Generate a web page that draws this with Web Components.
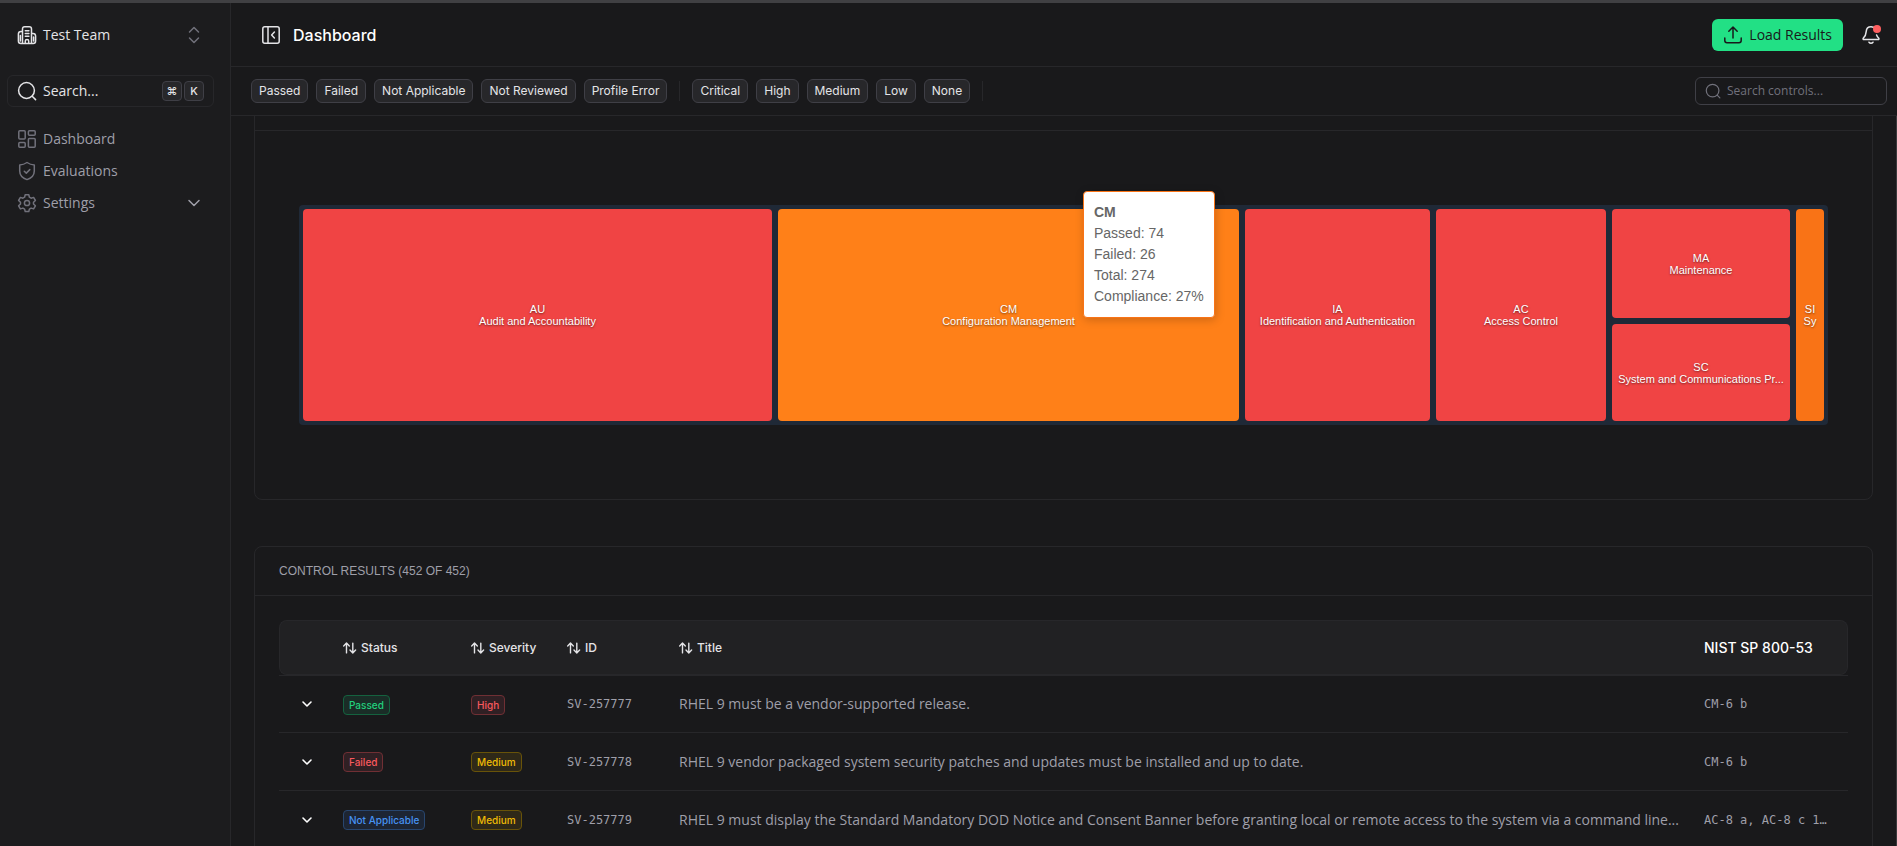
<!DOCTYPE html>
<html lang="en">
<head>
<meta charset="utf-8">
<meta name="viewport" content="width=device-width, initial-scale=1">
<title>Dashboard</title>
<style>
  html, body { margin: 0; height: 100%; }
  body {
    --bg: #19191b; --side: #1c1c1e; --line: #27272a; --chip: #27272a; --edge: #3f3f46;
    --muted: #9f9fa9; --dim: #71717b; --text: #e4e4e7;
    --label: Inter, sans-serif; --body: "Open Sans", sans-serif;
    background: var(--bg); color: var(--text); overflow: hidden;
    font-family: var(--body); font-size: 14px; line-height: 20px;
  }
</style>
</head>
<body>
<app-shell>
  <side-nav slot="side"></side-nav>
  <top-bar slot="main"></top-bar>
  <filter-bar slot="main"></filter-bar>
  <page-content slot="main"></page-content>
</app-shell>
<script>
const icons = {
  building: '<path d="M5.500 18.500V3.900a2.200 2.200 0 0 1 2.200-2.200h4.600a2.200 2.200 0 0 1 2.200 2.200v14.600M5.500 6.500H4A2.600 2.600 0 0 0 1.400 9.100v6.900A2.500 2.500 0 0 0 3.900 18.500h12.200a2.500 2.500 0 0 0 2.500-2.500v-4.900a2.600 2.600 0 0 0-2.600-2.600h-1.500M8.300 5.700h3.600M8.300 8.500h3.600M8.300 11.300h3.600M8.300 18.300v-2.200a1.700 1.700 0 0 1 3.400 0v2.200M3.400 10.500v5.500M16.600 12v4"/>',
  updown: '<path d="m5.500 7 4.500-4.500L14.500 7M5.500 13l4.500 4.500L14.500 13"/>',
  search: '<circle cx="9.500" cy="9.500" r="7.900"/><path d="m15.200 15.200 3.400 3.400"/>',
  grid: '<rect x="1.800" y="1.800" width="6.400" height="8.200" rx="1"/><rect x="11.400" y="1.800" width="6.800" height="4.400" rx="1"/><rect x="11.400" y="9.600" width="6.800" height="8.600" rx="1"/><rect x="1.800" y="13.400" width="6.400" height="4.800" rx="1"/>',
  shield: '<path d="M10 1.500c2.200 1.500 4.600 2.300 7.300 2.400v6c0 4.300-2.600 7-7.300 8.700-4.700-1.700-7.300-4.400-7.300-8.700v-6C5.400 3.800 7.800 3 10 1.500z"/><path d="m7.300 10.200 2 1.900 3.500-3.500"/>',
  gear: '<path d="M8.200 1.700h3.600l.6 2.500 1.700 1 2.500-.8 1.800 3.100-1.900 1.800v1.700l1.900 1.800-1.800 3.100-2.500-.8-1.700 1-.6 2.400H8.200l-.6-2.400-1.700-1-2.500.8-1.800-3.100L3.500 11V9.300L1.600 7.500l1.800-3.100 2.500.8 1.700-1z"/><circle cx="10" cy="10" r="2.600"/>',
  down: '<path d="m5 7.500 5 5 5-5"/>',
  panel: '<rect x="1.800" y="1.800" width="16.400" height="16.400" rx="2"/><path d="M7 1.800v16.400M13.400 7l-2.800 3 2.800 3"/>',
  upload: '<path d="M10 13V2M5.800 6.200 10 2l4.200 4.200M1.800 13v2.600a2.200 2.200 0 0 0 2.200 2.200h12a2.200 2.200 0 0 0 2.200-2.200V13"/>',
  bell: '<path d="M12.400 2.300C11.700 2 10.900 1.800 10 1.800c-3 0-4.600 2-4.800 4.800C5 9.600 4 11.400 2.400 13c-.7.800-.3 1.600.6 1.600h14c.9 0 1.300-.8.600-1.600-.9-.9-1.600-1.900-2-3M8 17.200c1 1.300 3 1.300 4 0"/>',
  sort: '<path d="M5 17V3M1 7l4-4 4 4M14 3v14M10 13l4 4 4-4"/>'
};
const icon = (name, size = 20, weight = 1.5) =>
  `<svg width="${size}" height="${size}" viewBox="0 0 20 20" fill="none" stroke="currentColor" stroke-width="${weight}" stroke-linecap="round" stroke-linejoin="round" aria-hidden="true">${icons[name]}</svg>`;

const reset = `*{box-sizing:border-box} svg{display:block;flex:none}
  button{margin:0;padding:0;border:0;background:none;color:inherit;font:inherit;text-align:left} a{color:inherit;text-decoration:none}`;

function define(name, css, html) {
  customElements.define(name, class extends HTMLElement {
    connectedCallback() {
      if (this.shadowRoot) return;
      const root = this.attachShadow({ mode: 'open' });
      const tpl = document.createElement('template');
      tpl.innerHTML = `<style>${reset}${css}</style>` + (typeof html === 'function' ? html(this) : html);
      root.append(tpl.content.cloneNode(true));
    }
  });
}

define('app-shell', `
  :host{display:grid;grid-template-columns:231px minmax(0,1fr);height:100vh;border-top:3px solid #404043;box-sizing:border-box}
  .main{display:flex;flex-direction:column;min-height:0}`,
  `<slot name="side"></slot><main class="main"><slot name="main"></slot></main>`);

define('nav-item', `
  :host{display:block}
  a{display:flex;align-items:center;gap:6px;height:32px;padding:0 10px;color:var(--muted)}
  a>svg:first-child{color:var(--dim)} span{flex:1}`,
  el => `<a href="#">${icon(el.getAttribute('icon'))}<span><slot></slot></span>${el.hasAttribute('expandable') ? icon('down') : ''}</a>`);

define('side-nav', `
  :host{display:block;background:var(--side);border-right:1px solid var(--line);padding:16px 16px 0 7px}
  .team,.search{display:flex;align-items:center;gap:6px;width:100%;height:32px;padding:0 10px}
  .team{color:var(--text)} .team svg:last-child{color:var(--dim)}
  span{flex:1}
  .search{margin:24px 0 16px;border:1px solid var(--line);border-radius:6px;padding:0 9px}
  .keys{display:flex;gap:2px}
  kbd{width:20px;height:20px;border:1px solid var(--edge);border-radius:4px;background:var(--chip);font:500 11px/18px var(--label);text-align:center}`,
  `<button class="team">${icon('building')}<span>Test Team</span>${icon('updown')}</button>
   <button class="search">${icon('search')}<span>Search...</span><div class="keys"><kbd>⌘</kbd><kbd>K</kbd></div></button>
   <nav><nav-item icon="grid">Dashboard</nav-item><nav-item icon="shield">Evaluations</nav-item><nav-item icon="gear" expandable>Settings</nav-item></nav>`);

define('top-bar', `
  :host{display:flex;align-items:center;height:64px;flex:none;box-sizing:border-box;border-bottom:1px solid var(--line);padding:0 16px 0 30px;gap:12px}
  h1{margin:0;flex:1;font:500 16px/24px var(--label);color:#fff}
  .load{display:flex;align-items:center;gap:6px;height:32px;padding:0 11px;border-radius:6px;background:#22e085;color:#19191b}
  .bell{position:relative;margin-left:6px}
  .bell i{position:absolute;right:0;top:0;width:8px;height:8px;border-radius:50%;background:#ff5f60}`,
  `<button aria-label="Collapse sidebar">${icon('panel')}</button><h1>Dashboard</h1>
   <button class="load">${icon('upload')}Load Results</button>
   <button class="bell" aria-label="Notifications">${icon('bell')}<i></i></button>`);

define('filter-chip', `
  :host{display:block}
  button{display:block;height:24px;padding:0 7px;border:1px solid var(--edge);border-radius:6px;background:var(--chip);font:400 12px/22px var(--label)}`,
  `<button><slot></slot></button>`);

define('filter-bar', `
  :host{display:flex;align-items:center;gap:8px;height:49px;flex:none;box-sizing:border-box;border-bottom:1px solid var(--line);padding:0 10px 0 20px}
  hr{width:1px;height:20px;margin:0 4px;border:0;background:var(--line)}
  label{display:flex;align-items:center;gap:6px;width:192px;height:28px;margin-left:auto;padding:0 9px;border:1px solid var(--edge);border-radius:6px;color:var(--dim)}
  input{flex:1;min-width:0;padding:0;border:0;outline:0;background:none;color:var(--text);font:400 12px/16px var(--body)}
  input::placeholder{color:var(--dim);opacity:1}`,
  `${['Passed', 'Failed', 'Not Applicable', 'Not Reviewed', 'Profile Error'].map(t => `<filter-chip>${t}</filter-chip>`).join('')}<hr>
   ${['Critical', 'High', 'Medium', 'Low', 'None'].map(t => `<filter-chip>${t}</filter-chip>`).join('')}<hr>
   <label>${icon('search', 16)}<input type="search" placeholder="Search controls..." aria-label="Search controls"></label>`);

define('panel-card', `
  :host{display:block;border:1px solid var(--line);border-radius:8px}
  header{height:49px;padding:0 24px;border-bottom:1px solid var(--line);font:400 12px/48px "Liberation Sans",sans-serif;color:var(--muted)}`,
  `<header><slot name="title"></slot></header><slot></slot>`);

define('tree-tile', `
  :host{display:flex;flex-direction:column;align-items:center;justify-content:center;min-width:0;overflow:hidden;border-radius:4px;background:#f04444;
    color:#fff;font:400 11px/12px "Liberation Sans",sans-serif;text-align:center;white-space:nowrap;text-shadow:0 1px 2px rgba(0,0,0,.5)}
  :host([level="mid"]){background:#f97316} :host([level="hover"]){background:#ff8018}`,
  el => `<div>${el.getAttribute('code')}</div><div><slot></slot></div>`);

define('tree-map', `
  :host{display:flex;gap:6px;height:220px;box-sizing:border-box;margin:74px 44px;padding:4px;border-radius:4px;background:#1f2937;position:relative}
  .col{display:flex;flex-direction:column;gap:6px;min-width:0}
  .tip{position:absolute;left:784px;top:-14px;padding:10px;border:1px solid #f97316;border-radius:4px;background:#fff;
    color:#666;font:400 14px/21px "Liberation Sans",sans-serif;box-shadow:1px 2px 10px rgba(0,0,0,.2)}`,
  `<tree-tile code="AU" style="flex:469 1 0">Audit and Accountability</tree-tile>
   <tree-tile code="CM" level="hover" style="flex:461 1 0">Configuration Management</tree-tile>
   <tree-tile code="IA" style="flex:185 1 0">Identification and Authentication</tree-tile>
   <tree-tile code="AC" style="flex:170 1 0">Access Control</tree-tile>
   <div class="col" style="flex:178 1 0">
     <tree-tile code="MA" style="flex:109 1 0">Maintenance</tree-tile>
     <tree-tile code="SC" style="flex:97 1 0">System and Communications Pr...</tree-tile>
   </div>
   <tree-tile code="SI" level="mid" style="flex:28 1 0">Sy</tree-tile>
   <div class="tip" role="tooltip"><b>CM</b><div>Passed: 74</div><div>Failed: 26</div><div>Total: 274</div><div>Compliance: 27%</div></div>`);

define('status-badge', `
  :host{display:inline-block;height:20px;box-sizing:border-box;padding:0 5px;border:1px solid;border-radius:4px;font:500 10px/18px var(--label);vertical-align:middle;white-space:nowrap}
  :host([tone="green"]){color:#22d07d;background:#1a2d27;border-color:#14623f}
  :host([tone="red"]){color:#f9595e;background:#302024;border-color:#702f34}
  :host([tone="blue"]){color:#4793f3;background:#1d2533;border-color:#28466f}
  :host([tone="yellow"]){color:#f0bb05;background:#2f2918;border-color:#685309}`,
  `<slot></slot>`);

const rows = [
  ['Passed', 'green', 'High', 'red', 'SV-257777', 'RHEL 9 must be a vendor-supported release.', 'CM-6 b'],
  ['Failed', 'red', 'Medium', 'yellow', 'SV-257778', 'RHEL 9 vendor packaged system security patches and updates must be installed and up to date.', 'CM-6 b'],
  ['Not Applicable', 'blue', 'Medium', 'yellow', 'SV-257779', 'RHEL 9 must display the Standard Mandatory DOD Notice and Consent Banner before granting local or remote access to the system via a command line...', 'AC-8 a, AC-8 c 1…']
];
define('results-table', `
  :host{display:block;padding:24px}
  table{width:100%;table-layout:fixed;border-collapse:separate;border-spacing:0}
  th,td{padding:0 16px;text-align:left;white-space:nowrap;overflow:hidden}
  th:first-child,td:first-child{padding:0 0 0 20px}
  th{height:55px;background:#212123;border:solid var(--line);border-width:1px 0;color:#fff;font:500 14px/20px var(--label)}
  th:first-child{border-left-width:1px;border-radius:8px 0 0 8px} th:last-child{border-right-width:1px;border-radius:0 8px 8px 0}
  th button{display:flex;align-items:center;gap:4px;font-size:12px;line-height:16px;color:var(--text)}
  td{height:58px;border-bottom:1px solid var(--line);color:var(--muted)}
  tr:first-child td{border-top:1px solid var(--line)}
  td button{display:block;color:#fff}
  .mono{font:400 12px/16px "DejaVu Sans Mono",monospace}`,
  `<table>
    <colgroup><col style="width:48px"><col style="width:128px"><col style="width:96px"><col style="width:112px"><col><col style="width:160px"></colgroup>
    <thead><tr><th></th>${['Status', 'Severity', 'ID', 'Title'].map(t => `<th><button>${icon('sort', 14, 2)}${t}</button></th>`).join('')}<th>NIST SP 800-53</th></tr></thead>
    <tbody>${rows.map(r => `<tr><td><button aria-label="Expand row">${icon('down', 16, 2)}</button></td>
      <td><status-badge tone="${r[1]}">${r[0]}</status-badge></td><td><status-badge tone="${r[3]}">${r[2]}</status-badge></td>
      <td class="mono">${r[4]}</td><td>${r[5]}</td><td class="mono">${r[6]}</td></tr>`).join('')}</tbody>
  </table>`);

define('page-content', `
  :host{display:block;flex:1;min-height:0;overflow:hidden;padding:0 23px;border-right:1px solid #3a3a3d}
  .map{margin:-35px 0 46px}`,
  `<panel-card class="map"><tree-map></tree-map></panel-card>
   <panel-card><span slot="title">CONTROL RESULTS (452 OF 452)</span><results-table></results-table></panel-card>`);
</script>
</body>
</html>
